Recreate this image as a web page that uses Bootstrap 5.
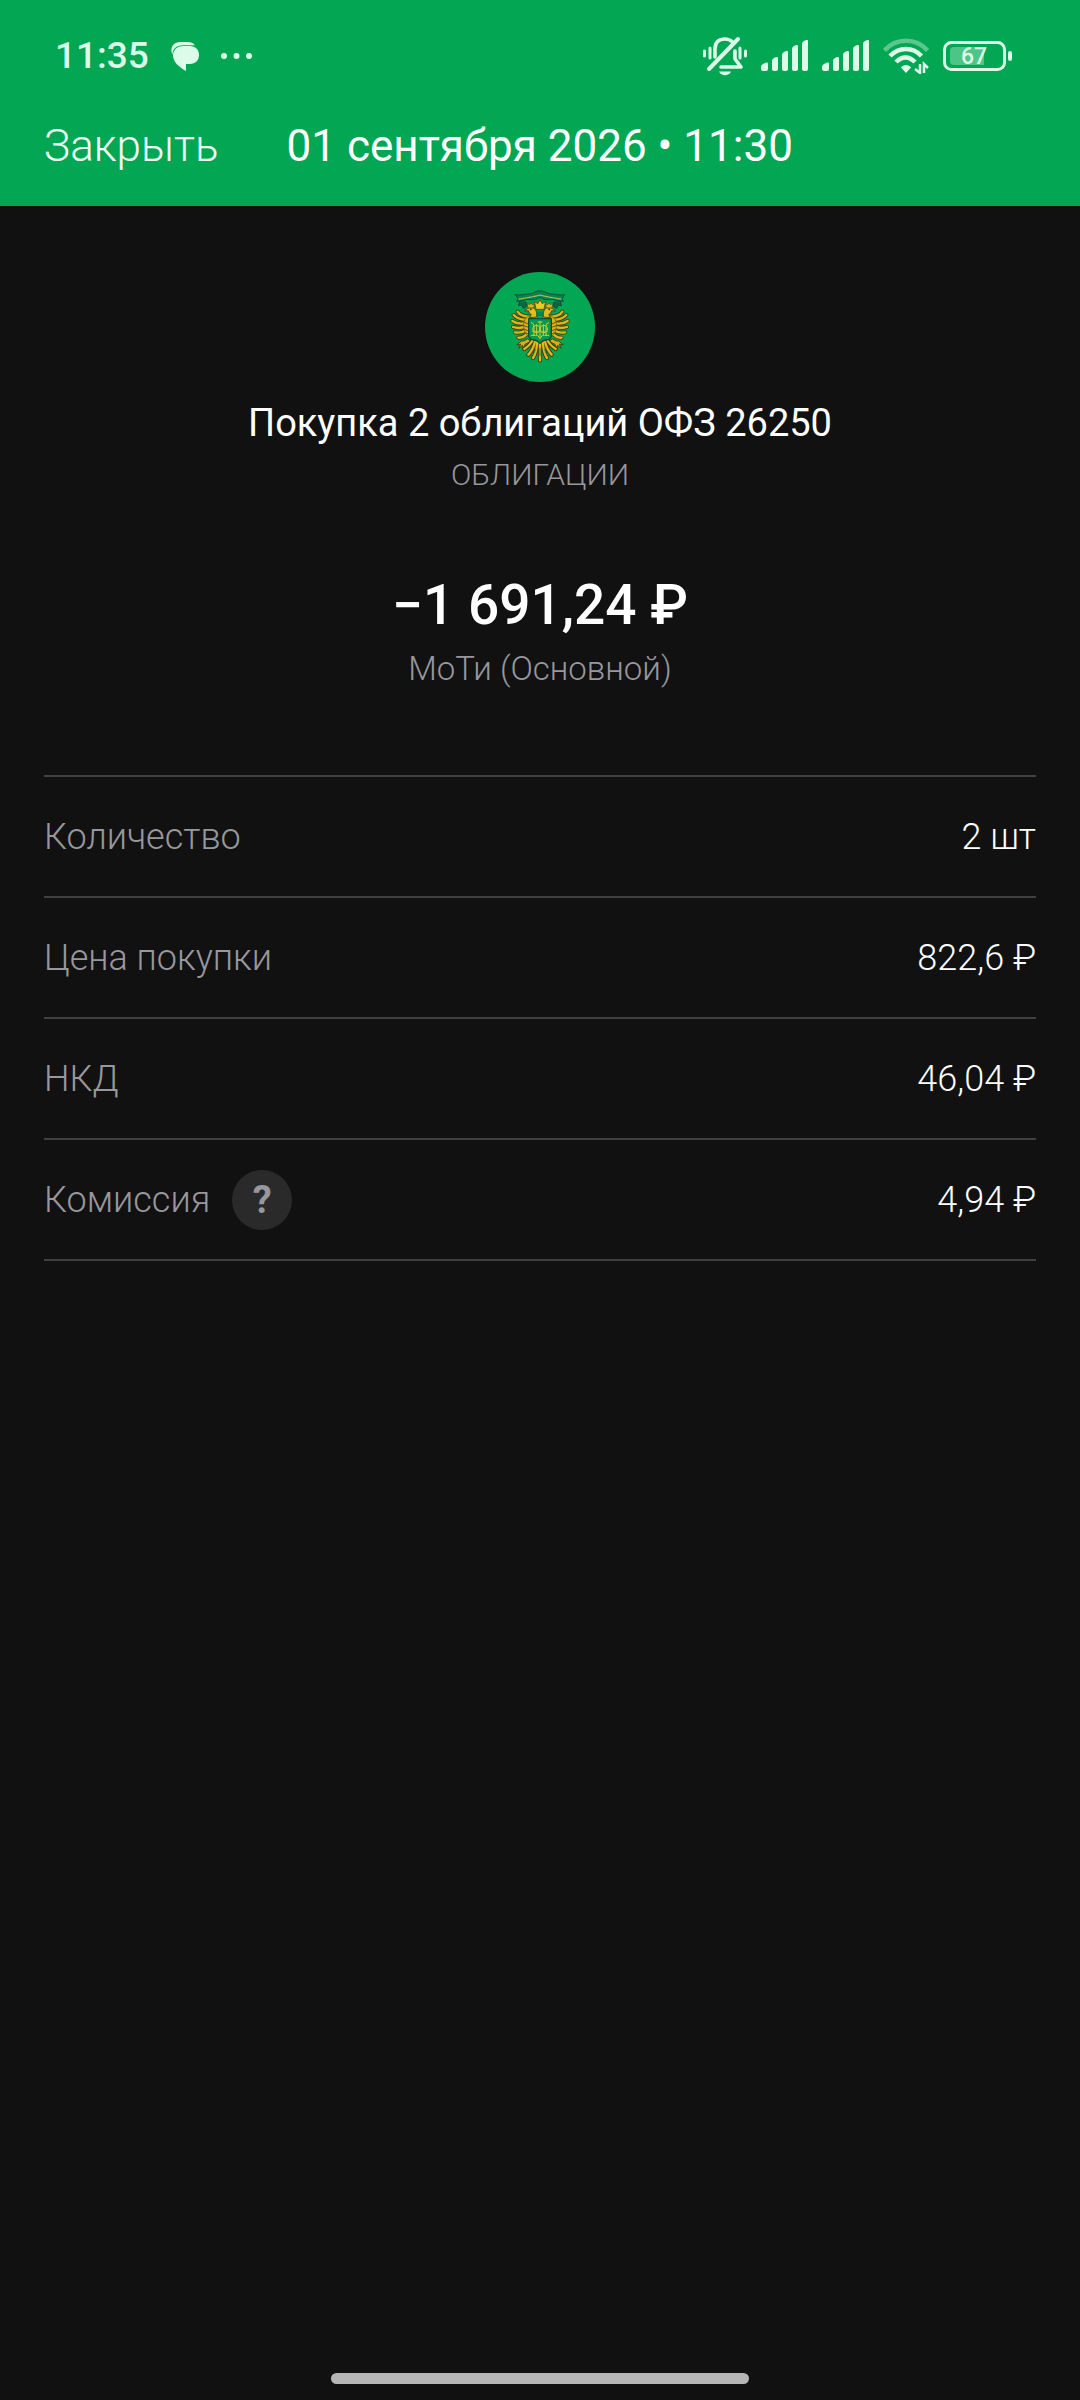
<!DOCTYPE html>
<html lang="ru" data-bs-theme="dark">
<head>
    <meta charset="UTF-8">
    <meta name="viewport" content="width=device-width, initial-scale=1.0">
    <title>Покупка облигаций</title>
    <link href="https://cdn.jsdelivr.net/npm/bootstrap@5.3.0/dist/css/bootstrap.min.css" rel="stylesheet">
    <style>
        body {
            background: #111111;
            color: #ffffff;
            font-family: Roboto, "Liberation Sans", sans-serif;
        }
        .top-area { background: #03a653; }
        .status-row {
            color: #dcfbe8;
            height: 112px;
            padding: 0 68px 0 55px;
        }
        .clock { font-size: 37px; font-weight: 500; line-height: 44px; }
        .notices { gap: 22px; }
        .indicators { gap: 13px; }
        .battery-text { font-size: 23px; font-weight: 500; }
        .title-row {
            height: 94px;
            padding: 0 44px 26px;
            gap: 68px;
            color: #f2fff8;
        }
        .title-text { font-size: 44px; line-height: 52px; }
        .btn-close-page {
            color: inherit;
            font-size: 44px;
            font-weight: 300;
            line-height: 52px;
        }
        .summary { padding: 66px 44px 86px; }
        .deal-name { font-size: 38px; line-height: 44px; margin-top: 19px; }
        .deal-kind { font-size: 30px; line-height: 36px; margin-top: 12px; }
        .deal-sum { font-size: 55px; font-weight: 500; line-height: 64px; margin-top: 80px; }
        .deal-account { font-size: 33px; line-height: 40px; margin-top: 12px; }
        .dim { color: #97979d; font-weight: 300; }
        .details { margin: 0 44px; border-top: 2px solid #404040; }
        .details-row {
            height: 121px;
            border-bottom: 2px solid #404040;
            font-size: 36px;
            font-weight: 300;
        }
        .btn-help {
            width: 60px;
            height: 60px;
            margin-left: 22px;
            background: #2a2a2b;
            color: #97979d;
            font-size: 38px;
            font-weight: 700;
            line-height: 60px;
        }
        .home-bar { width: 418px; height: 11px; background: #b6b6b6; margin-bottom: 16px; }
    </style>
</head>
<body>
<div class="d-flex flex-column min-vh-100">
    <header class="top-area">
        <div class="status-row d-flex align-items-center justify-content-between">
            <div class="notices d-flex align-items-center">
                <span class="clock">11:35</span>
                <svg width="28" height="29" viewBox="0 0 28 29" fill="currentColor" aria-hidden="true">
                    <path d="M10 0h7c3 0 5 1 7 3.200H12C5 3.200 1.500 7 1.400 13C-1.500 6 2 0 10 0z"/>
                    <path d="M12 4h7c5.500 0 9 3.500 9 9s-3.500 9-9 9h-4v7C8 25 2 20 2 13.500C2 8 6 4 12 4z"/>
                </svg>
                <svg width="31" height="8" viewBox="0 0 31 8" fill="currentColor" aria-hidden="true">
                    <circle cx="3" cy="4" r="3"/><circle cx="15.500" cy="4" r="3"/><circle cx="28" cy="4" r="3"/>
                </svg>
            </div>
            <div class="indicators d-flex align-items-center">
                <svg width="46" height="40" viewBox="-1 0 46 40" fill="none" stroke="currentColor" stroke-width="3" stroke-linecap="round" stroke-linejoin="round" aria-hidden="true">
                    <path d="M1.500 15v5M7 12v10M37 12v10M42.500 15v5"/>
                    <path d="M12 21v-8c0-7 4-10 10-10c3 0 5.500 1 7.500 3M32 15v8l6 8H18" stroke-width="3.600"/>
                    <path d="M35 3L6 33" stroke-width="4"/>
                    <path d="M16 35.500h12c-2 5-10 5-12 0z" fill="currentColor" stroke="none"/>
                </svg>
                <svg width="48" height="32" viewBox="0 0 48 32" fill="currentColor" aria-hidden="true">
                    <path id="bars" d="M0 27q0-2 2-3l3-1.500q2-.5 2 1V29q0 2-2 2H2q-2 0-2-2zM11 21q0-2 2-3l2-1q2-.5 2 1v11q0 2-2 2h-2q-2 0-2-2zM21 15q0-2 2-3l2-1q2-.5 2 1v17q0 2-2 2h-2q-2 0-2-2zM31 9q0-2 2-3l2-1q2-.5 2 1v23q0 2-2 2h-2q-2 0-2-2zM41 4q0-2 2-3l2-1q2-.5 2 1v28q0 2-2 2h-2q-2 0-2-2z"/>
                </svg>
                <svg width="48" height="32" viewBox="0 0 48 32" fill="currentColor" aria-hidden="true"><use href="#bars"/></svg>
                <svg width="46" height="36" viewBox="0 0 46 36" fill="none" stroke="currentColor" stroke-width="4.500" aria-hidden="true">
                    <path d="M1.500 12.500C13-.5 33-.5 44.500 12.500" opacity=".4"/>
                    <path d="M7 18C16 8.500 30 8.500 38.500 18"/>
                    <path d="M13 24c6-6 13-6 19 0"/>
                    <path d="M18 29.500c2-3.500 8-3.500 10 0l-5 5.500z" fill="currentColor" stroke="none"/>
                    <path d="M37 26v9l-5-4M41 35v-9l4 4" stroke-width="2.500"/>
                </svg>
                <svg width="70" height="32" viewBox="0 0 70 32" role="img" aria-label="67%">
                    <rect x="2.500" y="2.500" width="60" height="27" rx="7" fill="none" stroke="currentColor" stroke-width="3"/>
                    <path d="M12 7h30v18H12q-4 0-4-4V11q0-4 4-4z" fill="currentColor" opacity=".35"/>
                    <rect x="66" y="11" width="4" height="10" rx="2" fill="currentColor"/>
                    <text class="battery-text" x="32" y="24" text-anchor="middle" fill="currentColor">67</text>
                </svg>
            </div>
        </div>
        <div class="title-row d-flex align-items-center">
            <button type="button" class="btn-close-page btn p-0 border-0">Закрыть</button>
            <h1 class="title-text fw-normal m-0">01 сентября 2026 • 11:30</h1>
        </div>
    </header>
    <main class="flex-grow-1">
        <section class="summary d-flex flex-column align-items-center text-center">
            <svg width="110" height="110" viewBox="0 0 330 330" aria-hidden="true">
                <circle cx="165" cy="165" r="165" fill="#03a653"/>
                <g transform="translate(60 39)" stroke-linecap="round" stroke-linejoin="round">
                    <!-- ribbon -->
                    <path d="M44 48l-3 14 10-2 4 10 10-6-3-14M166 48l3 14-10-2-4 10-10-6 3-14" fill="#046b45" stroke="#064b35" stroke-width="3"/>
                    <path d="M31 29q14 3 26-1q26 0 40-10h16q14 10 40 10q12 4 26 1l-8 12 4 8q-16 1-31-6q-25 4-39-6q-14 10-39 6q-15 7-31 6l4-8z" fill="#0a8150" stroke="#07513a" stroke-width="3"/>
                    <path d="M42 42q32-4 63-12q31 8 63 12" fill="none" stroke="#8fbf4d" stroke-width="4" stroke-dasharray="3 3"/>
                    <!-- wings -->
                    <g id="wing">
                        <g fill="none" stroke="#43400f" stroke-width="12">
                            <path d="M80 94Q50 98 38 80M66 104Q42 106 26 90M64 114Q40 120 22 108M64 124Q44 132 24 126M66 134Q48 146 30 142M70 142Q56 160 40 158"/>
                        </g>
                        <g fill="none" stroke="#e2b719" stroke-width="7">
                            <path d="M80 94Q50 98 38 80M66 104Q42 106 26 90M64 114Q40 120 22 108M64 124Q44 132 24 126M66 134Q48 146 30 142M70 142Q56 160 40 158"/>
                        </g>
                        <path d="M96 92Q72 88 60 102Q50 120 62 146L74 158V104H96z" fill="#dcae17" stroke="#5f5210" stroke-width="2"/>
                        <path d="M58 112l10 4M56 122l12 4M59 133l10 4M63 144l9 4" fill="none" stroke="#705a0c" stroke-width="3"/>
                        <!-- head -->
                        <path d="M95 95Q98 80 88 70Q77 61 68 70L58 78l12-1q2 9 9 12l-5 8z" fill="#e6bd21" stroke="#514710" stroke-width="3"/>
                        <circle cx="77" cy="73" r="3" fill="#3b3b0d"/>
                        <path d="M69 68l-2-13 7 4 4-6 4 6 7-2-3 11z" fill="#d8b51f" stroke="#564d10" stroke-width="2"/>
                        <!-- leg -->
                        <path d="M67 162Q58 170 49 168l-14 12 12-3-6 13 11-9 2 10 7-14 17-7z" fill="#dcae17" stroke="#4b4510" stroke-width="3"/>
                    </g>
                    <use href="#wing" transform="translate(210 0) scale(-1 1)"/>
                    <!-- crown -->
                    <path d="M93 72l-5-23 10 7 7-12 7 12 10-7-5 23z" fill="#f0c91f" stroke="#6b5710" stroke-width="3"/>
                    <path d="M94 80h22v13H94z" fill="#05824a"/>
                    <!-- tail -->
                    <g fill="none">
                        <path d="M105 168V226M97 170Q94 205 84 219M113 170Q116 205 126 219M90 170Q84 194 70 209M120 170Q126 194 140 209M82 168Q72 184 58 192M128 168Q138 184 152 192" stroke="#43400f" stroke-width="13"/>
                        <path d="M105 168V226M97 170Q94 205 84 219M113 170Q116 205 126 219M90 170Q84 194 70 209M120 170Q126 194 140 209M82 168Q72 184 58 192M128 168Q138 184 152 192" stroke="#e2b719" stroke-width="7"/>
                        <path d="M105 190v22M91 194l-4 10M119 194l4 10" stroke="#068a4b" stroke-width="3"/>
                    </g>
                    <!-- shield -->
                    <path d="M71 101h68v48q0 14-16 16-12 2-18 10-6-8-18-10-16-2-16-16z" fill="#06984f" stroke="#065236" stroke-width="4"/>
                    <g fill="none" stroke="#c9cf35" stroke-width="3">
                        <path d="M105 109v51M99 111h12M98 151l7 10 7-10"/>
                        <path d="M79 113q7 1 8 9v30M95 119v33M79 151h12M131 113q-7 1-8 9v30M115 119v33M131 151h-12"/>
                        <ellipse cx="94" cy="132" rx="11" ry="11"/>
                        <ellipse cx="116" cy="132" rx="11" ry="11"/>
                        <path d="M82 139h46" stroke-width="2"/>
                    </g>
                </g>
            </svg>
            <h2 class="deal-name fw-normal mb-0">Покупка 2 облигаций ОФЗ 26250</h2>
            <p class="deal-kind dim mb-0">ОБЛИГАЦИИ</p>
            <p class="deal-sum mb-0">−1 691,24 ₽</p>
            <p class="deal-account dim mb-0">МоТи (Основной)</p>
        </section>
        <dl class="details">
            <div class="details-row d-flex align-items-center justify-content-between">
                <dt class="dim">Количество</dt>
                <dd class="mb-0">2 шт</dd>
            </div>
            <div class="details-row d-flex align-items-center justify-content-between">
                <dt class="dim">Цена покупки</dt>
                <dd class="mb-0">822,6 ₽</dd>
            </div>
            <div class="details-row d-flex align-items-center justify-content-between">
                <dt class="dim">НКД</dt>
                <dd class="mb-0">46,04 ₽</dd>
            </div>
            <div class="details-row d-flex align-items-center justify-content-between">
                <dt class="dim d-flex align-items-center">Комиссия
                    <button type="button" class="btn-help btn rounded-circle border-0 p-0" aria-label="О комиссии">?</button>
                </dt>
                <dd class="mb-0">4,94 ₽</dd>
            </div>
        </dl>
    </main>
    <div class="home-bar rounded-pill align-self-center"></div>
</div>
<script src="https://cdn.jsdelivr.net/npm/bootstrap@5.3.0/dist/js/bootstrap.bundle.min.js"></script>
</body>
</html>
